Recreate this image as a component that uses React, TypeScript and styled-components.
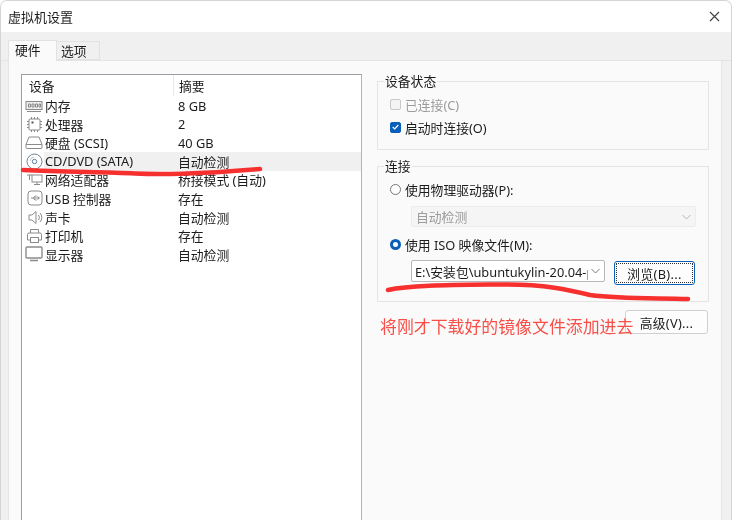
import React from "react";
import styled, { createGlobalStyle } from "styled-components";

const Global = createGlobalStyle`
  html, body { margin: 0; padding: 0; background: #fff; }
  body { font-family: "Noto Sans", "Noto Sans CJK SC", "Liberation Sans", sans-serif; font-size: 12.8px; color: #1c1c1c; }
`;

const Window = styled.div`
  position: relative;
  width: 732px;
  height: 520px;
  box-sizing: border-box;
  overflow: hidden;
  border-top: 1px solid #d4d4d4;
  border-left: 1px solid #d4d4d4;
  border-right: 1px solid #d4d4d4;
  border-radius: 7px 7px 0 0;
  background: #f0f0f0;
  display: flex;
  flex-direction: column;
  filter: blur(0.3px);
`;
const TitleBar = styled.div`
  height: 31px;
  flex: none;
  background: #fff;
  display: flex;
  align-items: center;
  justify-content: space-between;
  padding: 0 11px 0 7px;
  font-size: 13px;
`;
const TabStrip = styled.div`
  height: 29px;
  flex: none;
  display: flex;
  align-items: flex-end;
  padding-left: 7px;
  border-bottom: 1px solid #e4e4e4;
  box-sizing: border-box;
`;
const Tab = styled.div<{ $active?: boolean }>`
  box-sizing: border-box;
  height: ${(p) => (p.$active ? 21 : 19)}px;
  width: ${(p) => (p.$active ? 49 : 43)}px;
  margin-bottom: ${(p) => (p.$active ? -1 : 0)}px;
  background: ${(p) => (p.$active ? "#fafafa" : "#f0f0f0")};
  border: 1px solid #e2e2e2;
  border-bottom: ${(p) => (p.$active ? "none" : "1px solid #e2e2e2")};
  border-left: ${(p) => (p.$active ? "1px solid #e2e2e2" : "none")};
  display: flex;
  align-items: center;
  padding-left: ${(p) => (p.$active ? 6 : 4)}px;
  padding-bottom: ${(p) => (p.$active ? 3 : 0)}px;
`;
const Panel = styled.div`
  flex: 1;
  min-height: 0;
  margin: 0 9px 0 7px;
  background: #fafafa;
  border-left: 1px solid #e6e6e6;
  border-right: 1px solid #e6e6e6;
  display: flex;
  align-items: flex-start;
  padding: 13px 0 0 12px;
  gap: 15px;
`;
const List = styled.div`
  box-sizing: border-box;
  width: 341px;
  height: 460px;
  flex: none;
  background: #fff;
  border: 1px solid #9c9ca4;
  border-right-color: #b4b4b8;
`;
const Header = styled.div`
  display: grid;
  grid-template-columns: 151px 1fr;
  height: 21px;
  box-sizing: border-box;
  align-items: center;
`;
const HeaderCell = styled.div<{ $divider?: boolean }>`
  height: 100%;
  display: flex;
  align-items: center;
  padding-left: ${(p) => (p.$divider ? 5 : 7)}px;
  border-left: ${(p) => (p.$divider ? "1px solid #e8e8e8" : "none")};
`;
const Rows = styled.div`
  display: flex;
  flex-direction: column;
`;
const Row = styled.div`
  display: grid;
  grid-template-columns: 22px 134px 1fr;
  height: 18.6px;
  align-items: center;
`;
const IconCell = styled.div`
  display: flex;
  align-items: center;
  justify-content: flex-end;
  padding-right: 1px;
  height: 100%;
  svg { display: block; }
`;
const Name = styled.div<{ $selected?: boolean }>`
  height: 100%;
  display: flex;
  align-items: center;
  padding-left: 1px;
  white-space: nowrap;
  background: ${(p) => (p.$selected ? "#f0f0f0" : "transparent")};
`;
const Value = styled(Name)`
  padding-left: 0;
`;
const Side = styled.div`
  width: 332px;
  flex: none;
  display: flex;
  flex-direction: column;
  padding-top: 7px;
`;
const Group = styled.div<{ $height: number; $top: number }>`
  box-sizing: border-box;
  position: relative;
  margin: ${(p) => p.$top}px 0 0;
  height: ${(p) => p.$height}px;
  padding: 0 0 0 12px;
  border: 1px solid #e4e4e4;
  display: flex;
  flex-direction: column;
`;
const Legend = styled.div`
  position: absolute;
  top: -8px;
  left: 6px;
  padding: 0 1px;
  background: #fafafa;
  line-height: 15px;
`;
const OptionRow = styled.div<{ $top: number; $disabled?: boolean }>`
  display: flex;
  align-items: center;
  gap: 4px;
  height: 18px;
  margin-top: ${(p) => p.$top}px;
  color: ${(p) => (p.$disabled ? "#9b9b9b" : "#1c1c1c")};
`;
const CheckBox = styled.span<{ $checked?: boolean }>`
  box-sizing: border-box;
  width: 11px;
  height: 11px;
  border-radius: 2px;
  background: ${(p) => (p.$checked ? "#0a60b8" : "#f4f4f4")};
  border: 1px solid ${(p) => (p.$checked ? "#0a60b8" : "#c8c8c8")};
  display: flex;
  align-items: center;
  justify-content: center;
`;
const Radio = styled.span<{ $checked?: boolean }>`
  box-sizing: border-box;
  width: 11px;
  height: 11px;
  border-radius: 50%;
  background: #fff;
  border: ${(p) => (p.$checked ? "3.5px solid #0a60b8" : "1px solid #777")};
`;
const SelectBox = styled.div<{ $disabled?: boolean; $width: number }>`
  box-sizing: border-box;
  width: ${(p) => p.$width}px;
  height: ${(p) => (p.$disabled ? 21 : 22)}px;
  background: ${(p) => (p.$disabled ? "#f5f5f5" : "#fff")};
  border: 1px solid ${(p) => (p.$disabled ? "#ececec" : "#b8b8b8")};
  border-radius: 2px;
  display: flex;
  align-items: center;
  justify-content: space-between;
  padding: 0 4px 0 3px;
  color: ${(p) => (p.$disabled ? "#9b9b9b" : "#1c1c1c")};
  white-space: nowrap;
  overflow: hidden;
`;
const SelectText = styled.span<{ $inset?: boolean }>`
  overflow: hidden;
  flex: 1;
  padding-left: ${(p) => (p.$inset ? 1 : 0)}px;
  margin-right: 3px;
`;
const Indented = styled.div<{ $top: number }>`
  margin: ${(p) => p.$top}px 0 0 21px;
  display: flex;
  align-items: flex-start;
  gap: 9px;
`;
const Button = styled.div<{ $focused?: boolean; $width: number }>`
  box-sizing: border-box;
  width: ${(p) => p.$width}px;
  height: 24px;
  flex: none;
  margin-top: 1px;
  background: #fdfdfd;
  border: 1px solid ${(p) => (p.$focused ? "#0a60b8" : "#d0d0d0")};
  border-radius: 3px;
  display: flex;
  align-items: center;
  justify-content: center;
  letter-spacing: 0.3px;
  outline: ${(p) => (p.$focused ? "1px dotted #333" : "none")};
  outline-offset: -3px;
`;
const AdvancedRow = styled.div`
  display: flex;
  justify-content: flex-end;
  margin-top: 7px;
  padding-right: 1px;
`;
const Annotation = styled.div`
  position: absolute;
  left: 379px;
  top: 315px;
  font-size: 16.9px;
  line-height: 20px;
  color: #f85048;
  font-family: "Noto Sans CJK SC", sans-serif;
  white-space: nowrap;
`;
const Scribble = styled.svg`
  position: absolute;
  left: -1px;
  top: -1px;
  pointer-events: none;
`;

const stroke = { fill: "none", stroke: "#8a8a8a", strokeWidth: 1 };

const Memory = () => (
  <svg width="18" height="14" viewBox="0 0 18 14" {...stroke}>
    <rect x="1" y="2.5" width="16" height="8" fill="#eee" />
    <path d="M3.5 5h2v3h-2zM7 5h2v3H7zM10.5 5h2v3h-2zM14 5h1.5v3H14zM2 12.5h14" />
  </svg>
);
const Cpu = () => (
  <svg width="17" height="17" viewBox="0 0 17 17" {...stroke}>
    <rect x="3" y="3" width="11" height="11" rx="1" />
    <path d="M5.5 1v2M8.5 1v2M11.5 1v2M5.5 14v2M8.5 14v2M11.5 14v2M1 5.5h2M1 8.5h2M1 11.5h2M14 5.5h2M14 8.5h2M14 11.5h2" />
    <rect x="5.5" y="5.5" width="2" height="2" fill="#555" stroke="none" />
  </svg>
);
const Disk = () => (
  <svg width="18" height="15" viewBox="0 0 18 15" {...stroke}>
    <path d="M1 9.5 4 2h10l3 7.5v3a1 1 0 0 1-1 1H2a1 1 0 0 1-1-1zM1 9.5h16" />
  </svg>
);
const Cd = () => (
  <svg width="17" height="17" viewBox="0 0 17 17" {...stroke}>
    <circle cx="8.5" cy="8.5" r="7.5" stroke="#70808e" />
    <circle cx="8.5" cy="8.5" r="2.2" stroke="#5d7f9c" />
    <path d="M4 8a4.5 4.5 0 0 1 4-4" stroke="#b9c4cf" />
  </svg>
);
const Network = () => (
  <svg width="17" height="15" viewBox="0 0 17 15" {...stroke}>
    <rect x="6" y="3" width="10" height="7" />
    <path d="M1 3h5M3.5 3v5M8 12.5h6M11 10v2.5" />
  </svg>
);
const Usb = () => (
  <svg width="16" height="16" viewBox="0 0 16 16" {...stroke}>
    <rect x="1" y="1" width="14" height="14" rx="3" />
    <path d="M4 8h8M10.5 6.5 12.5 8l-2 1.500M6.500 8l1.500-2h1.500M6.500 8l1.500 2h1.500" />
  </svg>
);
const Speaker = () => (
  <svg width="16" height="15" viewBox="0 0 16 15" {...stroke}>
    <path d="M2 5h3l4-3.500v12L5 10H2zM11.500 5a4 4 0 0 1 0 5M13 3a6.500 6.500 0 0 1 0 9" />
  </svg>
);
const Printer = () => (
  <svg width="17" height="16" viewBox="0 0 17 16" {...stroke}>
    <path d="M4.500 5V1.500h8V5M4.500 12H1.500V6.500a1.500 1.500 0 0 1 1.500-1.500h11a1.500 1.500 0 0 1 1.500 1.500V12h-3" />
    <rect x="4.500" y="9.500" width="8" height="5" />
  </svg>
);
const Monitor = () => (
  <svg width="18" height="16" viewBox="0 0 18 16" {...stroke}>
    <rect x="1" y="1" width="16" height="11" rx="1" strokeWidth="1.400" />
    <path d="M5 14.500h8" strokeWidth="1.400" />
  </svg>
);
const Chevron = ({ color }: { color: string }) => (
  <svg width="9" height="6" viewBox="0 0 9 6" fill="none" stroke={color} strokeWidth="1">
    <path d="M.5 1 4.500 5l4-4" />
  </svg>
);
const Close = () => (
  <svg width="11" height="11" viewBox="0 0 11 11" fill="none" stroke="#444" strokeWidth="1.200">
    <path d="M1 1l9 9M10 1l-9 9" />
  </svg>
);

const devices: { icon: React.ReactNode; name: string; value: string; selected?: boolean }[] = [
  { icon: <Memory />, name: "内存", value: "8 GB" },
  { icon: <Cpu />, name: "处理器", value: "2" },
  { icon: <Disk />, name: "硬盘 (SCSI)", value: "40 GB" },
  { icon: <Cd />, name: "CD/DVD (SATA)", value: "自动检测", selected: true },
  { icon: <Network />, name: "网络适配器", value: "桥接模式 (自动)" },
  { icon: <Usb />, name: "USB 控制器", value: "存在" },
  { icon: <Speaker />, name: "声卡", value: "自动检测" },
  { icon: <Printer />, name: "打印机", value: "存在" },
  { icon: <Monitor />, name: "显示器", value: "自动检测" },
];

export default function App() {
  return (
    <>
      <Global />
      <Window>
        <TitleBar>
          <span>虚拟机设置</span>
          <Close />
        </TitleBar>
        <TabStrip>
          <Tab $active>硬件</Tab>
          <Tab>选项</Tab>
        </TabStrip>
        <Panel>
          <List>
            <Header>
              <HeaderCell>设备</HeaderCell>
              <HeaderCell $divider>摘要</HeaderCell>
            </Header>
            <Rows>
              {devices.map((d) => (
                <Row key={d.name}>
                  <IconCell>{d.icon}</IconCell>
                  <Name $selected={d.selected}>{d.name}</Name>
                  <Value $selected={d.selected}>{d.value}</Value>
                </Row>
              ))}
            </Rows>
          </List>
          <Side>
            <Group $height={69} $top={0}>
              <Legend>设备状态</Legend>
              <OptionRow $top={13} $disabled>
                <CheckBox />
                <span>已连接(C)</span>
              </OptionRow>
              <OptionRow $top={5}>
                <CheckBox $checked>
                  <svg width="7" height="6" viewBox="0 0 7 6" fill="none" stroke="#fff" strokeWidth="1.200">
                    <path d="M.7 3 2.700 5 6.300 1" />
                  </svg>
                </CheckBox>
                <span>启动时连接(O)</span>
              </OptionRow>
            </Group>
            <Group $height={136} $top={16}>
              <Legend>连接</Legend>
              <OptionRow $top={13}>
                <Radio />
                <span>使用物理驱动器(P):</span>
              </OptionRow>
              <Indented $top={8}>
                <SelectBox $disabled $width={285}>
                  <SelectText $inset>自动检测</SelectText>
                  <Chevron color="#b4b4b4" />
                </SelectBox>
              </Indented>
              <OptionRow $top={8}>
                <Radio $checked />
                <span>使用 ISO 映像文件(M):</span>
              </OptionRow>
              <Indented $top={7}>
                <SelectBox $width={194}>
                  <SelectText>E:\安装包\ubuntukylin-20.04-pro</SelectText>
                  <Chevron color="#777" />
                </SelectBox>
                <Button $focused $width={81}>浏览(B)...</Button>
              </Indented>
            </Group>
            <AdvancedRow>
              <Button $width={83}>高级(V)...</Button>
            </AdvancedRow>
          </Side>
        </Panel>
        <Annotation>将刚才下载好的镜像文件添加进去</Annotation>
        <Scribble width="732" height="520" viewBox="0 0 732 520" fill="none" stroke="#f5302e" strokeLinecap="round" strokeLinejoin="round">
          <path strokeWidth="4.500" d="M23 170C60 172 100 172 135 173.500C170 175 225 172 260 169" />
          <path strokeWidth="4.500" d="M388 290C410 285 450 285 500 284.500C545 284 570 290 590 295C620 299 650 298 688 299" />
        </Scribble>
      </Window>
    </>
  );
}
